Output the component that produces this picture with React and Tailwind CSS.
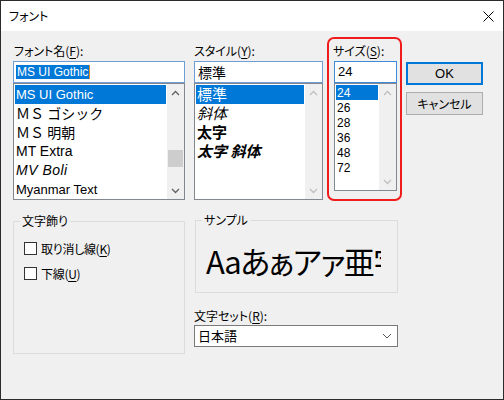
import React from "react";

const Chev = ({ up, color = "#606060" }) => (
  <svg width="9" height="6" viewBox="0 0 9 6">
    <path
      d={up ? "M1 5 L4.5 1.5 L8 5" : "M1 1 L4.5 4.5 L8 1"}
      fill="none"
      stroke={color}
      strokeWidth="1.3"
    />
  </svg>
);

const Scrollbar = ({ enabled, thumbTop }) => (
  <div className="w-[17px] h-full bg-[#f0f0f0] flex flex-col shrink-0">
    <div className="h-[17px] flex items-center justify-center shrink-0">
      <Chev up color={enabled ? "#606060" : "#bfbfbf"} />
    </div>
    <div className="flex-1 flex flex-col">
      {enabled && <div className="mx-[1px] h-[17px] bg-[#cdcdcd]" style={{ marginTop: thumbTop }} />}
    </div>
    <div className="h-[17px] flex items-center justify-center shrink-0">
      <Chev color={enabled ? "#606060" : "#bfbfbf"} />
    </div>
  </div>
);

const U = ({ children }) => <span className="underline underline-offset-2">{children}</span>;

export default function App() {
  const fontItems = [
    { t: "MS UI Gothic", c: "font-['Liberation_Sans',sans-serif] text-[13px]", sel: true },
    { t: "ＭＳ ゴシック", c: "font-['Noto_Sans_CJK_JP',sans-serif] text-[14px] [font-feature-settings:normal]" },
    { t: "ＭＳ 明朝", c: "font-['Noto_Sans_CJK_JP',sans-serif] text-[14px] [font-feature-settings:normal]" },
    { t: "MT Extra", c: "font-['Liberation_Sans',sans-serif] text-[14px]" },
    { t: "MV Boli", c: "font-['Liberation_Sans',sans-serif] text-[14px] italic tracking-[0.5px]" },
    { t: "Myanmar Text", c: "font-['Liberation_Sans',sans-serif] text-[13px]" },
  ];
  const styleItems = [
    { t: "標準", c: "", sel: true },
    { t: "斜体", c: "italic" },
    { t: "太字", c: "font-bold" },
    { t: "太字 斜体", c: "font-bold italic" },
  ];
  const sizes = ["24", "26", "28", "36", "48", "72"];

  return (
    <div className="w-[504px] h-[400px] border border-[#2b2b2b] bg-[#f0f0f0] flex flex-col overflow-hidden text-black text-[12px] font-['Noto_Sans_CJK_JP',sans-serif] [font-feature-settings:'palt']">
      {/* Title bar */}
      <div className="h-[30px] bg-white flex items-center justify-between pl-[8px] pr-[9px] shrink-0">
        <span className="leading-[14px]">フォント</span>
        <svg width="11" height="11" viewBox="0 0 11 11">
          <path d="M0.5 0.5 L10.5 10.5 M10.5 0.5 L0.5 10.5" stroke="#000" strokeWidth="1" />
        </svg>
      </div>

      {/* Top row */}
      <div className="flex items-start pl-[12px] pt-[6px]">
        {/* Font name */}
        <div className="w-[172px] mt-[7px] flex flex-col">
          <div className="h-[17px] leading-[14px] pl-[1px]">
            フォント名(<U>F</U>):
          </div>
          <div className="h-[22px] border border-[#6f9ed6] bg-white flex items-center pl-[2px]">
            <span className="bg-[#0078d7] text-white leading-[14px] px-[1px] font-['Liberation_Sans',sans-serif] text-[12px]">
              MS UI Gothic
            </span>
            <span className="w-[1px] h-[14px] bg-[#e08a2c]" />
          </div>
          <div className="h-[117px] border border-[#828790] bg-white flex">
            <div className="flex-1 p-[1px] overflow-hidden">
              {fontItems.map((it) => (
                <div
                  key={it.t}
                  className={`h-[19px] flex items-center pl-[1px] whitespace-nowrap ${it.c} ${it.sel ? "bg-[#0078d7] text-white" : ""}`}
                >
                  {it.t}
                </div>
              ))}
            </div>
            <Scrollbar enabled thumbTop={49} />
          </div>
        </div>

        {/* Style */}
        <div className="w-[129px] ml-[9px] mt-[7px] flex flex-col">
          <div className="h-[17px] leading-[14px]">
            スタイル(<U>Y</U>):
          </div>
          <div className="h-[22px] border border-[#6f9ed6] bg-white flex items-center pl-[3px] text-[14px] [font-feature-settings:normal]">
            標準
          </div>
          <div className="h-[117px] border border-[#828790] bg-white flex">
            <div className="flex-1 p-[1px] overflow-hidden">
              {styleItems.map((it) => (
                <div
                  key={it.t}
                  className={`h-[19px] flex items-center pl-[1px] whitespace-nowrap text-[15px] [font-feature-settings:normal] ${it.c} ${it.sel ? "bg-[#0078d7] text-white" : ""}`}
                >
                  {it.t}
                </div>
              ))}
            </div>
            <Scrollbar enabled={false} />
          </div>
        </div>

        {/* Size (highlighted) */}
        <div className="w-[75px] h-[164px] ml-[4px] border-2 border-[#f01c1c] rounded-[7px] pt-[5px] pl-[4px] flex flex-col">
          <div className="h-[17px] leading-[14px]">
            サイズ(<U>S</U>):
          </div>
          <div className="ml-[1px] w-[63px] h-[22px] border border-[#3d8bd9] bg-white flex items-center pl-[3px] font-['Liberation_Sans',sans-serif] text-[13px]">
            24
          </div>
          <div className="ml-[1px] w-[63px] h-[108px] border border-[#828790] bg-white flex">
            <div className="flex-1 p-[1px] overflow-hidden">
              {sizes.map((s, i) => (
                <div
                  key={s}
                  className={`h-[15px] flex items-center pl-[1px] font-['Liberation_Sans',sans-serif] text-[12px] ${i === 0 ? "bg-[#0078d7] text-white" : ""}`}
                >
                  {s}
                </div>
              ))}
            </div>
            <Scrollbar enabled={false} />
          </div>
        </div>

        {/* Buttons */}
        <div className="w-[77px] ml-[4px] mt-[25px] flex flex-col">
          <div className="h-[23px] border-2 border-[#0078d7] bg-[#e1e1e1] flex items-center justify-center font-['Liberation_Sans',sans-serif] text-[13px]">
            OK
          </div>
          <div className="h-[23px] mt-[7px] border border-[#adadad] bg-[#e1e1e1] flex items-center justify-center">
            キャンセル
          </div>
        </div>
      </div>

      {/* Lower row */}
      <div className="flex items-start pl-[12px] mt-[12px]">
        <fieldset className="w-[172px] h-[140px] mt-[1px] border border-[#dcdcdc]">
          <legend className="ml-[6px] px-[2px] leading-[14px]">文字飾り</legend>
          <div className="pl-[10px] mt-[14px] flex flex-col gap-[12px]">
            <div className="flex items-center h-[13px]">
              <span className="w-[13px] h-[13px] border border-[#333] bg-white shrink-0" />
              <span className="ml-[4px] leading-[14px] tracking-[-0.3px]">
                取り消し線(<U>K</U>)
              </span>
            </div>
            <div className="flex items-center h-[13px]">
              <span className="w-[13px] h-[13px] border border-[#333] bg-white shrink-0" />
              <span className="ml-[4px] leading-[14px] tracking-[-0.3px]">
                下線(<U>U</U>)
              </span>
            </div>
          </div>
        </fieldset>

        <div className="ml-[9px] flex flex-col">
          <fieldset className="ml-[1px] w-[203px] h-[80px] border border-[#dcdcdc]">
            <legend className="ml-[6px] px-[2px] leading-[14px]">サンプル</legend>
            <div className="ml-[10px] w-[175px] mt-[14px] h-[40px] overflow-hidden whitespace-nowrap leading-[40px] text-[31px] tracking-[-1.5px]">
              Aaあぁアァ亜宇
            </div>
          </fieldset>
          <div className="mt-[16px] h-[16px] leading-[14px]">
            文字セット(<U>R</U>):
          </div>
          <div className="w-[204px] h-[22px] border border-[#7a7a7a] bg-white flex items-center justify-between pl-[3px] pr-[5px] text-[13px] [font-feature-settings:normal]">
            <span>日本語</span>
            <svg width="10" height="6" viewBox="0 0 10 6">
              <path d="M1 1 L5 5 L9 1" fill="none" stroke="#555" strokeWidth="1" />
            </svg>
          </div>
        </div>
      </div>
    </div>
  );
}
